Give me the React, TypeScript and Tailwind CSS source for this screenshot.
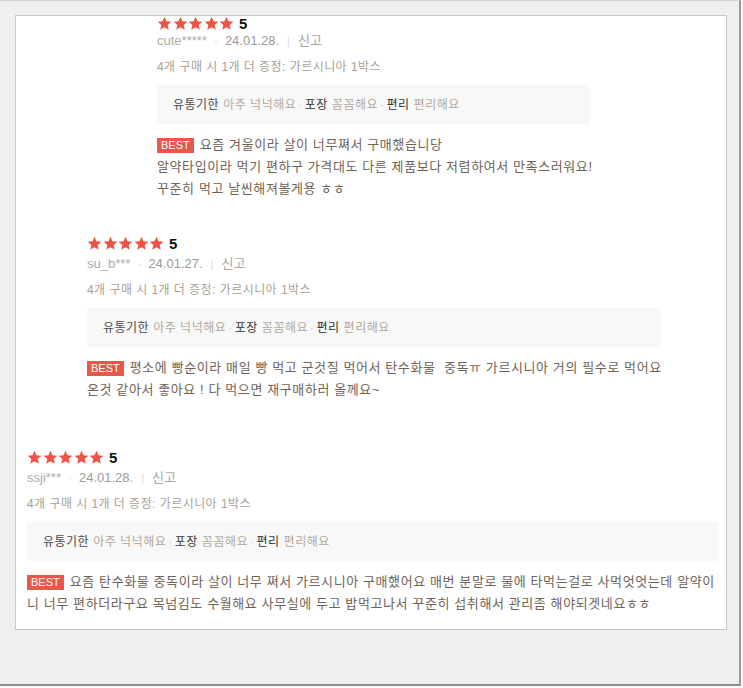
import React from "react";

type Review = {
  user: string;
  date: string;
  lines: string[];
  indent: string;
  boxWidth: string;
  gapTop: string;
  headRow: string;
};

const REVIEWS: Review[] = [
  {
    user: "cute*****",
    date: "24.01.28.",
    lines: [
      "요즘 겨울이라 살이 너무쪄서 구매했습니당",
      "알약타입이라 먹기 편하구 가격대도 다른 제품보다 저렴하여서 만족스러워요!",
      "꾸준히 먹고 날씬해져볼게용 ㅎㅎ",
    ],
    indent: "pl-[141px]",
    boxWidth: "w-[433px]",
    gapTop: "mt-0",
    headRow: "h-[14px] mb-[-2px]",
  },
  {
    user: "su_b***",
    date: "24.01.27.",
    lines: [
      "평소에 빵순이라 매일 빵 먹고 군것질 먹어서 탄수화물  중독ㅠ 가르시니아 거의 필수로 먹어요",
      "온것 같아서 좋아요 ! 다 먹으면 재구매하러 올께요~",
    ],
    indent: "pl-[71px]",
    boxWidth: "w-[574px]",
    gapTop: "mt-[35px]",
    headRow: "h-[16px]",
  },
  {
    user: "ssji***",
    date: "24.01.28.",
    lines: [
      "요즘 탄수화물 중독이라 살이 너무 쪄서 가르시니아 구매했어요 매번 분말로 물에 타먹는걸로 사먹엇엇는데 알약이",
      "니 너무 편하더라구요 목넘김도 수월해요 사무실에 두고 밥먹고나서 꾸준히 섭취해서 관리좀 해야되겟네요ㅎㅎ",
    ],
    indent: "pl-[11px]",
    boxWidth: "w-[691px]",
    gapTop: "mt-[48px]",
    headRow: "h-[16px]",
  },
];

function Stars() {
  return (
    <div className="flex gap-[0.5px]">
      {[0, 1, 2, 3, 4].map((i) => (
        <svg key={i} width="15" height="15" viewBox="0 0 24 24">
          <polygon
            points="12,1 15.2,8.2 23,9 17.1,14.3 18.8,22 12,18 5.2,22 6.9,14.3 1,9 8.8,8.2"
            fill="#ef5346"
          />
        </svg>
      ))}
    </div>
  );
}

function ReviewBlock({ review }: { review: Review }) {
  return (
    <div className={`${review.indent} ${review.gapTop}`}>
      <div className={`flex ${review.headRow} items-center gap-[5px]`}>
        <Stars />
        <span className="text-[15px] font-bold leading-none text-[#111]">5</span>
      </div>
      <div className="mt-[3px] flex h-[20px] items-center text-[12px] leading-[20px]">
        <span className="text-[13px] text-[#ababab]">{review.user}</span>
        <span className="mx-[7px] text-[#cfcfcf]">·</span>
        <span className="text-[13px] text-[#9a9a9a]">{review.date}</span>
        <span className="mx-[8px] text-[11px] text-[#dcdcdc]">|</span>
        <span className="text-[13px] text-[#a6a6a6]">신고</span>
      </div>
      <div className="mt-[6px] h-[20px] text-[12px] leading-[20px] tracking-[0.45px] text-[#a89f94]">
        4개 구매 시 1개 더 증정: 가르시니아 1박스
      </div>
      <div
        className={`mt-[8px] flex h-[39px] ${review.boxWidth} items-center bg-[#f8f8f8] pl-[16px] text-[12px] tracking-[0.5px] text-[#b2a899]`}
      >
        <span className="text-[#4a4a4a]">유통기한</span>
        <span className="ml-[4px]">아주 넉넉해요</span>
        <span className="mx-[2px] text-[#c4c4c4]">·</span>
        <span className="text-[#333]">포장</span>
        <span className="ml-[4px]">꼼꼼해요</span>
        <span className="mx-[2px] text-[#c4c4c4]">·</span>
        <span className="text-[#333]">편리</span>
        <span className="ml-[4px]">편리해요</span>
      </div>
      <div className="mt-[10px] text-[13px] leading-[22px] tracking-[0.6px] text-[#6f6358]">
        {review.lines.map((line, i) => (
          <div key={i} className="whitespace-pre">
            {i === 0 && (
              <span className="mr-[6px] inline-block bg-[#e8574b] px-[4px] text-[11px] leading-[15px] tracking-normal text-white">
                BEST
              </span>
            )}
            {line}
          </div>
        ))}
      </div>
    </div>
  );
}

export default function App() {
  return (
    <div className="h-[688px] w-[743px] bg-[#fafafa] font-['Liberation_Sans','Noto_Sans_CJK_KR',sans-serif]">
      <div className="h-[686px] w-[741px] border-r-2 border-b-2 border-t border-r-[#9a9a9a] border-b-[#8c8c8c] border-t-[#d4d4d4] bg-[#efefef] pl-[15px] pt-[14px]">
        <div className="h-[615px] w-[712px] overflow-hidden border border-[#c9c9c9] bg-white">
          {REVIEWS.map((review) => (
            <ReviewBlock key={review.user} review={review} />
          ))}
        </div>
      </div>
    </div>
  );
}
